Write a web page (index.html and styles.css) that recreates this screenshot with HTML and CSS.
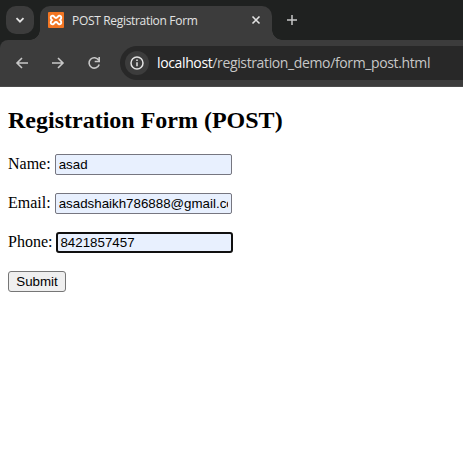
FILE: index.html
```html
<!DOCTYPE html>
<html lang="en">
<head>
<meta charset="utf-8">
<title>POST Registration Form</title>
<link rel="stylesheet" href="styles.css">
</head>
<body>
<header class="browser">
  <div class="tabs">
    <div class="search-tabs"><svg width="28" height="28" viewBox="0 0 28 28"><path d="M10.500 12.200 14 15.700l3.500-3.500" fill="none" stroke="#e3e3e3" stroke-width="1.800"/></svg></div>
    <div class="tab">
      <svg class="favicon" width="16" height="16" viewBox="0 0 16 16"><rect width="16" height="16" rx="1" fill="#f37623"/><path d="M5 3.800C2.400 3.200 2 6.500 4 8c-2 1.500-1.600 4.800 1 4.200 1.300-.3 1.500-2.200 3-2.200s1.700 1.900 3 2.200c2.600.6 3-2.700 1-4.200 2-1.500 1.600-4.800-1-4.200C9.700 4.100 9.500 6 8 6S6.300 4.100 5 3.800Z" fill="none" stroke="#fff" stroke-width="1.900"/></svg>
      <span class="tab-title">POST Registration Form</span>
      <svg class="close" width="10" height="10" viewBox="0 0 10 10"><path d="m1.500 1.500 7 7m0-7-7 7" stroke="#e3e3e3" stroke-width="1.600"/></svg>
    </div>
    <svg class="new-tab" width="12" height="12" viewBox="0 0 12 12"><path d="M6 1v10M1 6h10" stroke="#c7c7c7" stroke-width="1.500"/></svg>
  </div>
  <div class="toolbar">
    <svg class="nav" width="16" height="16" viewBox="0 0 16 16"><path d="M14 8H3M8 3 3 8l5 5" fill="none" stroke="#c7c7c7" stroke-width="1.600"/></svg>
    <svg class="nav" width="16" height="16" viewBox="0 0 16 16"><path d="M2 8h11M8 3l5 5-5 5" fill="none" stroke="#c7c7c7" stroke-width="1.600"/></svg>
    <svg class="nav" width="16" height="16" viewBox="0 0 16 16"><path d="M12.700 5.200A5.200 5.200 0 1 0 13.200 9.500M13.200 2v4.500H8.700" fill="none" stroke="#c7c7c7" stroke-width="1.600"/></svg>
    <div class="address">
      <div class="info"><svg width="14" height="14" viewBox="0 0 14 14"><circle cx="7" cy="7" r="6" fill="none" stroke="#e3e3e3" stroke-width="1.500"/><path d="M7 6.200v4M7 3.600v1.500" stroke="#e3e3e3" stroke-width="1.500"/></svg></div>
      <span class="url"><b>localhost</b>/registration_demo/form_post.html</span>
    </div>
  </div>
</header>
<main>
  <h2>Registration Form (POST)</h2>
  <form>
    <div class="row"><label for="name">Name:</label><input id="name" type="text" value="asad"></div>
    <div class="row"><label for="email">Email:</label><input id="email" type="text" value="asadshaikh786888@gmail.com"></div>
    <div class="row"><label for="phone">Phone:</label><input id="phone" class="focused" type="text" value="8421857457"></div>
    <button type="button">Submit</button>
  </form>
</main>
</body>
</html>
```
FILE: styles.css
```css
* { box-sizing: border-box; }
body { margin: 0; background: #fff; color: #000; font: 16px "Liberation Serif", serif; overflow: hidden; }
svg { display: block; flex: none; }
.browser { height: 87px; background: #1f2120; font-family: "Noto Sans", sans-serif; }
.tabs { height: 40px; display: flex; align-items: flex-start; padding: 6px 0 0 6px; }
.search-tabs { width: 28px; height: 28px; border-radius: 10px; background: #3c3c3c; }
.tab { position: relative; width: 232px; height: 34px; margin-left: 6px; padding: 0 11px 6px 8px; display: flex; align-items: center; border-radius: 10px 10px 0 0; background: #3c3c3c; }
.tab::before, .tab::after { content: ""; position: absolute; bottom: 0; width: 10px; height: 10px; }
.tab::before { left: -10px; background: radial-gradient(circle at 0 0, transparent 9.500px, #3c3c3c 10px); }
.tab::after { right: -10px; background: radial-gradient(circle at 100% 0, transparent 9.500px, #3c3c3c 10px); }
.tab-title { flex: 1; margin-left: 8px; padding-top: 2px; color: #e3e3e3; font: 12px/16px "Open Sans", sans-serif; letter-spacing: -0.32px; white-space: nowrap; }
.new-tab { margin: 8px 0 0 14px; }
.toolbar { height: 47px; display: flex; align-items: center; gap: 20px; padding-left: 14px; border-bottom: 1px solid #4b4b4b; border-top-left-radius: 8px; background: #3c3c3c; }
.address { flex: 1; height: 34px; margin-left: -2px; display: flex; align-items: center; padding-left: 5px; border-radius: 17px 0 0 17px; background: #282828; }
.info { width: 24px; height: 24px; display: grid; place-items: center; border-radius: 12px; background: #3c3c3c; }
.url { margin-left: 8px; color: #c7c7c7; font: 14px/20px "Open Sans", sans-serif; letter-spacing: -0.37px; white-space: nowrap; }
.url b { color: #fff; font-weight: 400; }
main { padding: 20px 8px 0; }
h2 { margin: 0 0 20px; font-size: 24px; line-height: 27px; }
form { display: flex; flex-direction: column; align-items: flex-start; gap: 18px; }
.row { height: 21px; display: flex; align-items: center; gap: 4px; line-height: 18px; }
label { margin-top: -1px; }
input { width: 177px; height: 21px; margin: 0; padding: 1px 3px; border: 1px solid #767680; border-radius: 2px; background: #e8f0fe; color: #000; font: 13.333px "Liberation Sans", sans-serif; outline: none; }
.focused { padding: 0 2px; border: 2px solid #101010; border-radius: 3px; }
button { width: 58px; height: 21px; padding: 0; border: 1px solid #767676; border-radius: 3px; background: #efefef; color: #000; font: 13.333px "Liberation Sans", sans-serif; }
```
